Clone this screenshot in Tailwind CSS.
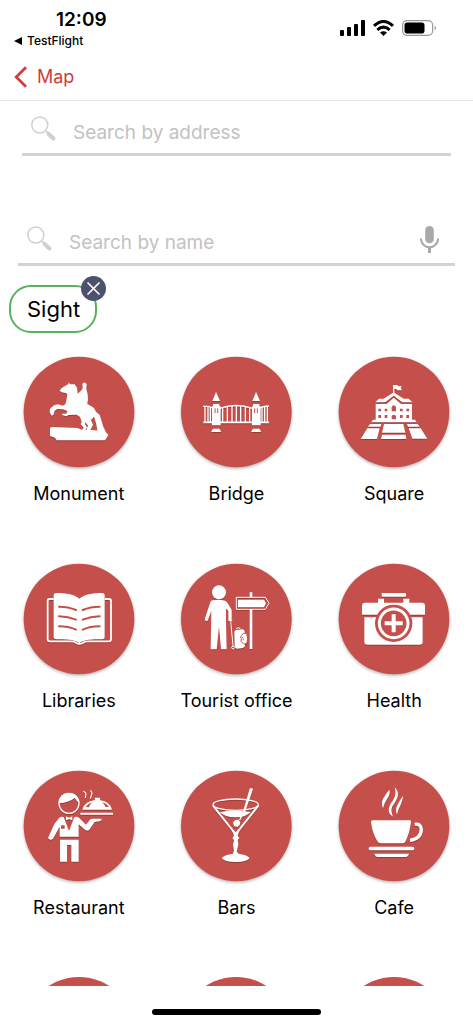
<!DOCTYPE html>
<html lang="en">
<head>
<meta charset="utf-8">
<meta name="viewport" content="width=device-width, initial-scale=1">
<title>Places</title>
<script src="https://cdn.jsdelivr.net/npm/@tailwindcss/browser@4"></script>
</head>
<body class="flex h-screen flex-col overflow-hidden bg-white font-['Inter','Liberation_Sans',sans-serif] text-black">

<header class="shrink-0 border-b border-[#e4e4e4]">
  <div class="flex h-[54px] justify-between pr-9 pl-3.5">
    <div class="w-fit pt-2">
      <div class="pl-[42px] text-[19px] leading-6 font-semibold">12:09</div>
      <a href="#" class="flex items-center gap-[5px] text-[12px] leading-[18px] font-medium">
        <svg class="h-2 w-2" viewBox="0 0 8 8" aria-hidden="true"><path d="M0 4 8 0V8Z"/></svg>TestFlight</a>
    </div>
    <div class="flex h-14 items-center gap-2">
      <svg class="h-4 w-[25px]" viewBox="0 0 25 16" aria-label="Signal"><rect x="0" y="10" width="4" height="6" rx="1"/><rect x="7" y="7" width="4" height="9" rx="1"/><rect x="14" y="4" width="4" height="12" rx="1"/><rect x="21" y="0" width="4" height="16" rx="1"/></svg>
      <svg class="h-4 w-[21px]" viewBox="0 0 21 16" aria-label="Wi-Fi"><g fill="none" stroke="#000" stroke-width="3"><path d="M1 5.900Q10.500-2.900 20 5.900"/><path d="M4.300 9.800q6.200-5.400 12.400 0"/></g><path d="M7 12.500q3.500-2.600 7 0L10.500 16Z"/></svg>
      <svg class="h-4 w-[35px]" viewBox="0 0 35 16" aria-label="Battery"><rect x=".6" y=".6" width="30" height="14.800" rx="4.400" fill="none" stroke="#999" stroke-width="1.200"/><rect x="2.500" y="2.500" width="20" height="11" rx="2.800"/><path d="M32.600 5.400q3 2.600 0 5.200Z" fill="#999"/></svg>
    </div>
  </div>
  <nav class="flex h-[46px] items-center pl-3.5">
    <a href="#" class="flex items-center gap-2.5 text-[18px] leading-6 text-[#d13b40]">
      <svg class="h-[22px] w-[13px]" viewBox="0 0 13 22" fill="none" stroke="currentColor" stroke-width="2.700" aria-hidden="true"><path d="M12 1.200 2.200 11 12 20.800"/></svg>Map</a>
  </nav>
</header>

<main class="min-h-0 flex-1 overflow-hidden">
  <form>
    <label class="mx-[22px] flex h-[55px] items-center border-b-[3px] border-[#d3d3d3] pt-1 pl-[9px]">
      <svg class="h-[26px] w-[26px] shrink-0" viewBox="0 0 26 26" fill="none" stroke="#d0d0d0" aria-hidden="true"><circle cx="8.800" cy="9" r="8" stroke-width="1.500"/><path d="m14.600 14.800 3 3" stroke-width="1.700"/><path d="m17.600 18 4.800 4.600" stroke-width="4.200" stroke-linecap="round"/></svg>
      <input type="text" aria-label="Search by address" placeholder="Search by address" class="ml-4 h-full min-w-0 flex-1 pt-1.5 text-[19px] outline-none placeholder:text-[#c2c2c2]">
    </label>
    <div class="mx-[18px] mt-[55px] flex h-[55px] items-center border-b-[3px] border-[#d3d3d3] pt-1 pr-4 pl-[9px]">
      <svg class="h-[26px] w-[26px] shrink-0" viewBox="0 0 26 26" fill="none" stroke="#d0d0d0" aria-hidden="true"><circle cx="8.800" cy="9" r="8" stroke-width="1.500"/><path d="m14.600 14.800 3 3" stroke-width="1.700"/><path d="m17.600 18 4.800 4.600" stroke-width="4.200" stroke-linecap="round"/></svg>
      <input type="text" aria-label="Search by name" placeholder="Search by name" class="ml-4 h-full min-w-0 flex-1 pt-1.5 text-[19px] outline-none placeholder:text-[#c2c2c2]">
      <button type="button" aria-label="Voice search"><svg class="h-[27px] w-[19px]" viewBox="0 0 19 27"><rect x="5.200" y="0" width="8.600" height="17.300" rx="4.300" fill="#a9a9a9"/><path d="M.9 12.600a8.600 8.600 0 0 0 17.200 0" fill="none" stroke="#a9a9a9" stroke-width="2"/><path d="M9.500 21v6" stroke="#a9a9a9" stroke-width="3"/></svg></button>
    </div>
  </form>

  <div class="relative mt-[19px] ml-[9px] w-fit rounded-[22px] border-2 border-[#58b15c] pr-[15px] pl-4">
    <span class="block text-[22px] leading-[44px]">Sight</span>
    <button type="button" aria-label="Remove Sight" class="absolute -top-[11px] -right-[11px] flex h-[25px] w-[25px] items-center justify-center rounded-full bg-[#4d5170]"><svg class="h-[13px] w-[13px]" viewBox="0 0 13 13" stroke="#fff" stroke-width="1.700" stroke-linecap="round"><path d="m1 1 11 11M12 1 1 12"/></svg></button>
  </div>

  <div class="mt-[23px] grid grid-cols-3 gap-y-[57px] text-[18px] leading-6">
    <button type="button" class="flex flex-col items-center gap-3.5">
      <svg class="h-28 w-28 overflow-visible" viewBox="27 30 336 336" aria-hidden="true"><circle class="drop-shadow-[0_4px_4px_rgba(0,0,0,0.3)]" cx="195" cy="198" r="166" fill="#c5504b"/>
        <g class="drop-shadow-[0_3px_2px_rgba(0,0,0,0.25)]" fill="#fff"><path d="M137 134 143 126 158 117 163 115 164 109 168 115 182 115 189 125 191 143 201 134 206 127 205 113 211 109 218 114 217 129 221 145 222 160 220 174 231 180 240 186 246 197 257 207 262 222 267 240 275 257 283 267 273 282H240L250 253 246 232 240 212 231 222 237 237 228 254H217L219 247 222 239 214 229 213 235 219 244 214 253H203L209 245 200 235 203 228 198 213 188 206 164 207 157 211 144 207 145 203 157 203 160 195 146 190 130 189 122 194 118 207 113 209 107 199 108 188 120 178 132 175 146 179 154 175 157 164 160 145 155 141 143 139Z"/><path d="M108 246 113 243 190 246 206 252 233 252 258 254 281 270 273 283H128L123 275 108 270Z"/></g></svg>
      <span>Monument</span>
    </button>
    <button type="button" class="flex flex-col items-center gap-3.5">
      <svg class="h-28 w-28 overflow-visible" viewBox="28 30 336 336" aria-hidden="true"><circle class="drop-shadow-[0_4px_4px_rgba(0,0,0,0.3)]" cx="197" cy="198" r="166" fill="#c5504b"/>
        <g class="drop-shadow-[0_3px_2px_rgba(0,0,0,0.25)]"><g fill="none" stroke="#fff"><path d="M97 181H113Q122 183 126 187M147 187Q196 170 246 187M266 187Q275 181 295 180" stroke-width="4"/><path d="M98 229H295" stroke-width="5"/><path d="M103 181V229M112 181V229M119 183V229M156 184V229M170 181V229M184 179V229M197 178V229M210 179V229M224 181V229M237 184V229M274 183V229M282 181V229M290 181V229" stroke-width="4"/></g>
        <g fill="#fff"><path d="M136 138 148 165H125ZM127 174H146V181H150V238H124V181H127ZM127 248H146L152 258H121ZM256 138 268 165H245ZM247 174H266V181H270V238H244V181H247ZM247 248H266L272 258H241Z"/></g><path d="M133 187V201M141 187V201M252 187V201M260 187V201" stroke="#c5504b" stroke-width="3"/></g></svg>
      <span>Bridge</span>
    </button>
    <button type="button" class="flex flex-col items-center gap-3.5">
      <svg class="h-28 w-28 overflow-visible" viewBox="27 30 336 336" aria-hidden="true"><circle class="drop-shadow-[0_4px_4px_rgba(0,0,0,0.3)]" cx="195" cy="198" r="166" fill="#c5504b"/>
        <g class="drop-shadow-[0_3px_2px_rgba(0,0,0,0.25)]"><path fill="#fff" d="M192 117H205L208 121H219L215 126 219 133H204L202 129H196V140L224 158H239L250 169H220L194 149 169 169H139L150 158H164L192 140ZM194 155 216 174H249V221H258L263 229H127L132 221H140V174H173ZM123 234H157L155 242H117ZM115 247H152L144 279H95ZM165 234H223L229 260H159ZM159 266H230L232 279H156ZM234 234H266L272 242H237ZM239 247H275L295 278H250Z"/><path fill="#c5504b" d="M148 188h8v8h-8ZM167 188h8v8h-8ZM188 196V182q6-9 13 0v14ZM213 188h8v8h-8ZM232 188h8v8h-8ZM148 207h8v9h-8ZM167 207h8v9h-8ZM188 220V210q6-7 13 0v10ZM213 207h8v9h-8ZM232 207h8v9h-8Z"/></g></svg>
      <span>Square</span>
    </button>

    <button type="button" class="flex flex-col items-center gap-3.5">
      <svg class="h-28 w-28 overflow-visible" viewBox="27 27 336 336" aria-hidden="true"><circle class="drop-shadow-[0_4px_4px_rgba(0,0,0,0.3)]" cx="195" cy="195" r="166" fill="#c5504b"/>
        <g class="drop-shadow-[0_3px_2px_rgba(0,0,0,0.25)]"><path d="M119 135H106Q101 135 101 141V256Q101 262 107 262H171Q181 262 187 267 196 272 206 267 212 262 222 262H285Q291 262 291 256V141Q291 135 285 135H272" fill="none" stroke="#fff" stroke-width="5.500"/><path fill="#fff" d="M119 123Q119 117 127 117C158 117 181 122 196 134 211 122 234 117 265 117Q272 117 272 123V250Q272 256 265 256C235 256 212 257 196 267 180 257 157 256 127 256Q119 256 119 250Z"/><path d="M135 158Q163 158 186 168M135 187Q163 188 186 197M135 217Q163 217 186 227M257 158Q229 158 206 168M257 187Q229 188 206 197M257 217Q229 217 206 227" fill="none" stroke="#c5504b" stroke-width="6" stroke-linecap="round"/></g></svg>
      <span>Libraries</span>
    </button>
    <button type="button" class="flex flex-col items-center gap-3.5">
      <svg class="h-28 w-28 overflow-visible" viewBox="28 27 336 336" aria-hidden="true"><circle class="drop-shadow-[0_4px_4px_rgba(0,0,0,0.3)]" cx="197" cy="195" r="166" fill="#c5504b"/>
        <g class="drop-shadow-[0_3px_2px_rgba(0,0,0,0.25)]"><g fill="#fff"><circle cx="145" cy="115" r="21"/><path d="M125 139Q144 135 163 140 170 143 173 151L183 168V200H173V171L166 164V202L168 286H151L145 218 138 286H120L122 171 111 200Q104 204 102 196L118 148Q119 141 125 139Z"/>
        <path d="M191 237Q190 229 198 228L214 226Q222 226 222 234L223 274Q223 281 216 282L199 284Q193 284 192 277Z"/></g>
        <path fill="#fff" stroke="#c5504b" stroke-width="3" d="M228 238Q215 235 213 244 207 249 212 254 208 263 215 266 222 274 229 267 233 253 228 238Z"/>
        <path d="M216 249Q219 254 217 259" fill="none" stroke="#c5504b" stroke-width="2.500"/>
        <path fill="#fff" d="M237 115H245V129H237ZM237 166H245V285H237ZM202 137H280L286 148 280 160H202Z"/><path d="M197 130H284L295 148 284 166H197ZM174 200H185M180 201 187 276M196 225Q200 219 209 223" fill="none" stroke="#fff" stroke-width="3"/><circle cx="187" cy="281" r="4" fill="none" stroke="#fff" stroke-width="3"/></g></svg>
      <span>Tourist office</span>
    </button>
    <button type="button" class="flex flex-col items-center gap-3.5">
      <svg class="h-28 w-28 overflow-visible" viewBox="27 27 336 336" aria-hidden="true"><circle class="drop-shadow-[0_4px_4px_rgba(0,0,0,0.3)]" cx="195" cy="195" r="166" fill="#c5504b"/>
        <g class="drop-shadow-[0_3px_2px_rgba(0,0,0,0.25)]"><g fill="#fff"><rect x="158" y="117" width="73" height="11" rx="2"/><path d="M147 134H165V146H223V134H241V146H279Q288 146 288 155V182H99V155Q99 146 108 146H147Z"/><path d="M106 190H281V264Q281 272 272 272H115Q106 272 106 264Z"/></g><circle cx="194" cy="208" r="56" fill="#c5504b"/><g fill="none" stroke="#fff"><circle cx="194" cy="208" r="43" stroke-width="9"/><path d="M194 181V235M167 208H221" stroke-width="12"/></g></g></svg>
      <span>Health</span>
    </button>

    <button type="button" class="flex flex-col items-center gap-3.5">
      <svg class="h-28 w-28 overflow-visible" viewBox="27 27 336 336" aria-hidden="true"><circle class="drop-shadow-[0_4px_4px_rgba(0,0,0,0.3)]" cx="195" cy="195" r="166" fill="#c5504b"/>
        <g class="drop-shadow-[0_3px_2px_rgba(0,0,0,0.25)]"><circle cx="165" cy="127" r="30" fill="none" stroke="#fff" stroke-width="4"/><path fill="#fff" d="M134 127Q136 96 165 96 193 97 196 125 184 118 183 110 166 124 134 127ZM156 166 165 170 175 166V178L165 174 156 178ZM136 170Q141 166 149 168L165 210 181 168Q193 165 198 173L216 191 228 176Q230 173 236 173H263Q263 179 257 181L242 183 226 206Q219 211 213 206L194 190V227H137V197L117 233Q108 240 102 231L121 189ZM138 236H194V302H172V252H159V302H138ZM199 155H297V161H199ZM205 146Q210 122 243 117V113H241L243 110H257L259 113 257 117Q289 122 294 146Z"/><path fill="#c5504b" d="M141 193H152V203H141ZM215 138Q222 128 235 124 227 131 225 139ZM264 124Q279 128 285 138H275Q272 130 264 124Z"/><path d="M208 91Q218 95 215 103L214 111M229 88Q237 96 232 102L229 113" fill="none" stroke="#fff" stroke-width="3.500"/></g></svg>
      <span>Restaurant</span>
    </button>
    <button type="button" class="flex flex-col items-center gap-3.5">
      <svg class="h-28 w-28 overflow-visible" viewBox="28 27 336 336" aria-hidden="true"><circle class="drop-shadow-[0_4px_4px_rgba(0,0,0,0.3)]" cx="197" cy="195" r="166" fill="#c5504b"/>
        <g class="drop-shadow-[0_3px_2px_rgba(0,0,0,0.25)]"><ellipse cx="195" cy="131" rx="68" ry="17" fill="none" stroke="#fff" stroke-width="4"/><path d="M127 134 190 213M263 134 200 213" fill="none" stroke="#fff" stroke-width="6"/><path fill="#fff" d="M148 154Q180 146 210 150L240 153Q224 170 195 169 162 169 148 154ZM237 83 241 81 247 84 222 156 215 158ZM187 184 194 177 204 176 209 184 207 192 200 198 191 196 188 190ZM176 194 195 214 215 194 203 217 201 225 206 231 201 237 203 250 200 264 198 272 204 278Q227 281 237 291 229 303 195 303 160 303 153 291 163 281 187 278L190 268 187 251 190 238 185 231 190 224 187 216Z"/><path d="M207 177 213 165" stroke="#fff" stroke-width="4"/></g></svg>
      <span>Bars</span>
    </button>
    <button type="button" class="flex flex-col items-center gap-3.5">
      <svg class="h-28 w-28 overflow-visible" viewBox="27 27 336 336" aria-hidden="true"><circle class="drop-shadow-[0_4px_4px_rgba(0,0,0,0.3)]" cx="195" cy="195" r="166" fill="#c5504b"/>
        <g class="drop-shadow-[0_3px_2px_rgba(0,0,0,0.25)]"><path fill="#fff" d="M131 178H243Q247 178 246 183 242 217 229 242 226 247 220 247H154Q149 247 145 241 129 214 126 183 126 178 131 178ZM197 79Q211 91 205 110 198 126 190 136 184 150 192 167 176 158 180 140 184 127 193 116 203 101 197 79ZM181 86Q184 98 176 111 166 125 162 142 155 127 163 112 170 99 181 86ZM222 104Q222 116 215 131 207 145 204 161 198 147 204 135 211 119 222 104Z"/><path d="M257 190Q276 187 277 206 275 234 243 238" fill="none" stroke="#fff" stroke-width="10"/><rect x="119" y="257" width="137" height="11" rx="5" fill="#fff"/><path fill="#fff" d="M136 278H240Q237 288 228 288H148Q139 288 136 278Z"/></g></svg>
      <span>Cafe</span>
    </button>

    <div class="mx-auto h-28 w-28 rounded-full bg-[#c5504b]"></div>
    <div class="mx-auto h-28 w-28 rounded-full bg-[#c5504b]"></div>
    <div class="mx-auto h-28 w-28 rounded-full bg-[#c5504b]"></div>
  </div>
</main>

<footer class="flex h-[38px] shrink-0 justify-center pt-[23px]">
  <div class="h-1.5 w-[169px] rounded-full bg-black"></div>
</footer>
</body>
</html>
